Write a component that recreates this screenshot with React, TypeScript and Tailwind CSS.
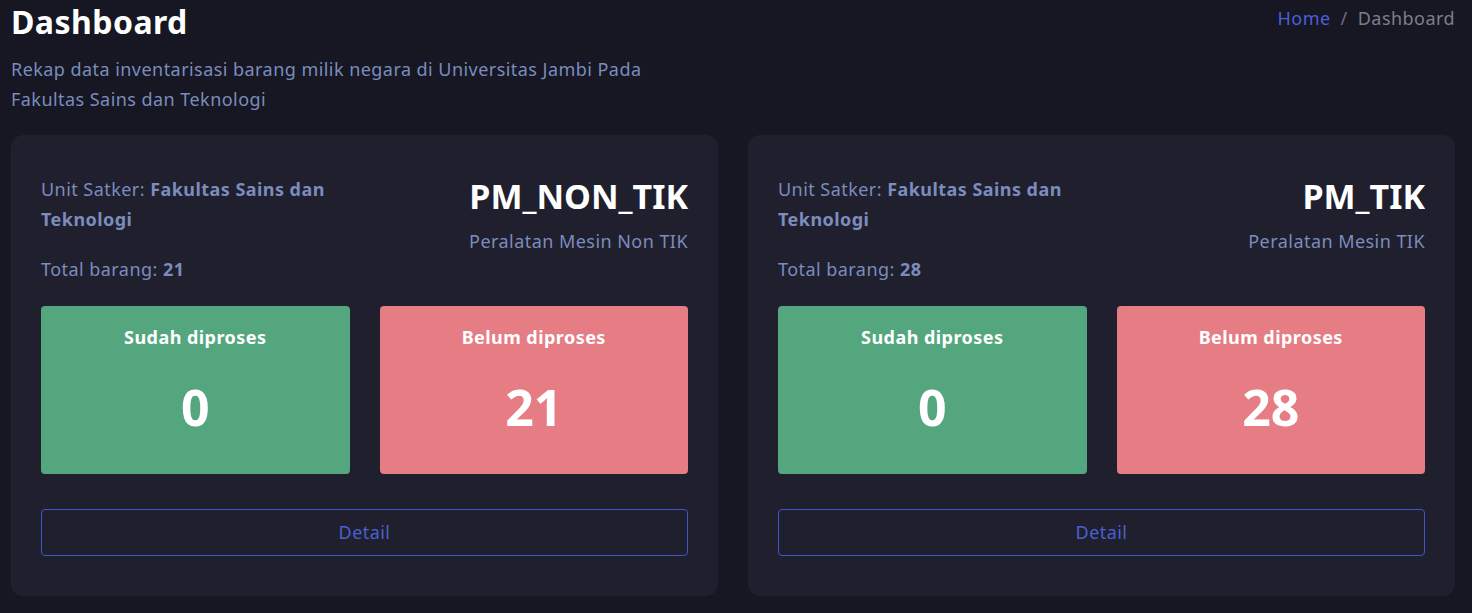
const summaries = [
  { code: 'PM_NON_TIK', name: 'Peralatan Mesin Non TIK', total: 21, done: 0, pending: 21 },
  { code: 'PM_TIK', name: 'Peralatan Mesin TIK', total: 28, done: 0, pending: 28 },
]

function SummaryCard({ code, name, total, done, pending }: (typeof summaries)[number]) {
  return (
    <div className="bg-[#1f1f2d] rounded-xl px-[30px] pt-[39px] pb-[40px]">
      <div className="flex justify-between">
        <div className="w-[300px] text-[18px] leading-[30px] text-[#7b8cbd]">
          <p>
            Unit Satker: <span className="font-bold">Fakultas Sains dan Teknologi</span>
          </p>
          <p className="mt-[20px]">
            Total barang: <span className="font-bold">{total}</span>
          </p>
        </div>
        <div className="text-right">
          <h2 className="text-[34px] leading-[44px] font-bold tracking-normal text-white">{code}</h2>
          <p className="mt-[8px] text-[18px] leading-[30px] text-[#7b8cbd]">{name}</p>
        </div>
      </div>

      <div className="grid grid-cols-2 gap-[30px] mt-[22px]">
        <div className="h-[168px] rounded bg-[#54a67f] text-white text-center pt-[16px]">
          <h3 className="text-[18px] leading-[30px] font-bold">Sudah diproses</h3>
          <p className="mt-[20px] text-[50px] leading-[70px] font-bold tracking-normal">{done}</p>
        </div>
        <div className="h-[168px] rounded bg-[#e67c84] text-white text-center pt-[16px]">
          <h3 className="text-[18px] leading-[30px] font-bold">Belum diproses</h3>
          <p className="mt-[20px] text-[50px] leading-[70px] font-bold tracking-normal">{pending}</p>
        </div>
      </div>

      <button
        type="button"
        className="w-full h-[47px] mt-[35px] rounded border border-[#3e56c8] text-[18px] text-[#4a5fd0]"
      >
        Detail
      </button>
    </div>
  )
}

export default function App() {
  return (
    <div
      className="min-h-screen bg-[#161722] px-[11px] pb-[18px] tracking-[0.45px]"
      style={{ fontFamily: '"Noto Sans", Lato, sans-serif' }}
    >
      <div className="flex justify-between">
        <div>
          <h1 className="text-[32px] leading-[44px] font-bold text-white">Dashboard</h1>
          <p className="mt-[10px] w-[680px] text-[18px] leading-[30px] text-[#7b8cbd]">
            Rekap data inventarisasi barang milik negara di Universitas Jambi Pada Fakultas Sains dan Teknologi
          </p>
        </div>
        <div className="flex gap-[10px] pt-[3px] pr-[6px] text-[18px] leading-[30px]">
          <a href="#" className="text-[#4b5fdc]">Home</a>
          <span className="text-[#6c7080]">/</span>
          <span className="text-[#7a7f8c]">Dashboard</span>
        </div>
      </div>

      <div className="grid grid-cols-2 gap-[30px] mt-[21px] mr-[6px]">
        {summaries.map((s) => (
          <SummaryCard key={s.code} {...s} />
        ))}
      </div>
    </div>
  )
}
